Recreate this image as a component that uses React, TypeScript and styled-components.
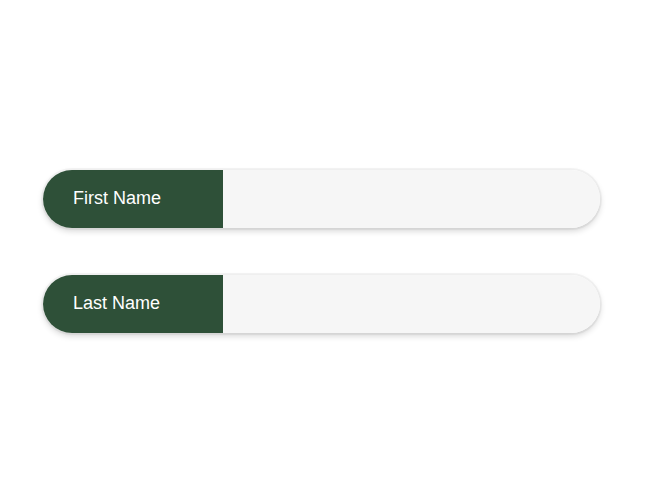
import React from "react";
import styled, { createGlobalStyle } from "styled-components";

const GlobalStyle = createGlobalStyle`
	html, body {
		margin: 0;
		padding: 0;
		background: #ffffff;
		font-family: "Liberation Sans", Arial, sans-serif;
	}
`;

const fields = ["First Name", "Last Name"];

function App() {
	return (
		<>
			<GlobalStyle />
			<Page>
				<Form>
					{fields.map((name) => (
						<Field key={name}>
							<Label>{name}</Label>
							<Input type="text" aria-label={name} />
						</Field>
					))}
				</Form>
			</Page>
		</>
	);
}

export default App;

const Page = styled.div`
	height: 500px;
	display: flex;
	align-items: center;
	padding: 2px 0 0 43px;
	box-sizing: border-box;
`;

const Form = styled.div`
	width: 557px;
	display: flex;
	flex-direction: column;
	gap: 47px;
`;

const Field = styled.label`
	display: flex;
	height: 58px;
	border-radius: 29px;
	overflow: hidden;
	box-shadow: 0 0 0 2px rgba(0, 0, 0, 0.04), 0 3px 6px rgba(0, 0, 0, 0.17);
`;

const Label = styled.span`
	width: 180px;
	flex-shrink: 0;
	background: #2e5038;
	color: #ffffff;
	font-size: 18px;
	display: flex;
	align-items: center;
	padding-left: 30px;
	box-sizing: border-box;
`;

const Input = styled.input`
	flex: 1;
	border: none;
	outline: none;
	background: #f6f6f6;
	font-size: 18px;
	font-family: inherit;
	padding: 0 20px;
`;
